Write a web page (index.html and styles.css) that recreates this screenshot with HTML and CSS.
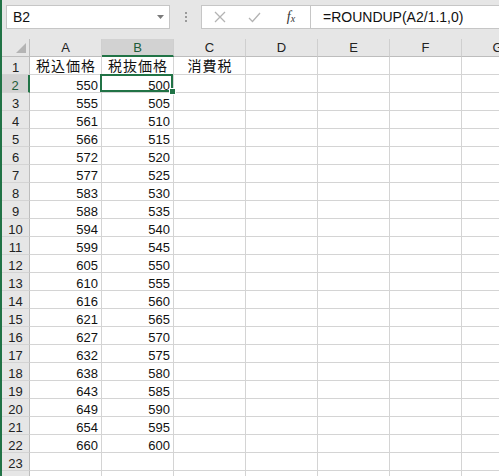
FILE: index.html
```html
<!DOCTYPE html>
<html>
<head>
    <title>Book1 - Excel</title>
    <meta charset="utf-8">
    <link rel="stylesheet" href="styles.css">
</head>
<body>
<div class="window">
    <div class="edge"></div>
    <div class="main">
        <div class="toolbar">
            <div class="namebox">
                <span>B2</span>
                <svg class="drop" width="7" height="4" viewBox="0 0 7 4"><polygon points="0,0 7,0 3.5,4" fill="#7a7a7a"/></svg>
            </div>
            <div class="grip"><i></i><i></i><i></i></div>
            <div class="fxbox">
                <span class="slot">
                    <svg width="12" height="12" viewBox="0 0 12 12"><path d="M1 1 L11 11 M11 1 L1 11" stroke="#b3b3b3" stroke-width="1.3" fill="none"/></svg>
                </span>
                <span class="slot">
                    <svg width="13" height="11" viewBox="0 0 13 11"><path d="M1 6 L4.5 9.5 L12 1" stroke="#b3b3b3" stroke-width="1.3" fill="none"/></svg>
                </span>
                <span class="slot fx">f<sub>x</sub></span>
            </div>
            <div class="formula">=ROUNDUP(A2/1.1,0)</div>
        </div>

        <div class="sheet" id="sheet"></div>
    </div>
</div>

<script type="text/javascript">
    (function(){
        var sheet = document.getElementById("sheet");
        var cols = ["A","B","C","D","E","F","G"];
        var taxIn = [550,555,561,566,572,577,583,588,594,599,605,610,616,621,627,632,638,643,649,654,660];
        var html = "";

        // header row
        html += '<div class="corner"><svg width="10" height="10" viewBox="0 0 10 10"><polygon points="0,10 10,0 10,10" fill="#b4b4b4"/></svg></div>';
        for(var c = 0; c < cols.length; c++){
            html += '<div class="colhead' + (cols[c] == "B" ? ' sel' : '') + '">' + cols[c] + '</div>';
        }

        // 23 rows visible, the 24th only shows its top gridlines
        for(var r = 1; r <= 24; r++){
            html += '<div class="rowhead' + (r == 2 ? ' sel' : '') + '">' + (r < 24 ? r : '') + '</div>';
            for(var c = 0; c < cols.length; c++){
                var text = "", cls = "cell";
                if(r == 1){
                    cls += " title";
                    if(c == 0) text = "税込価格";
                    if(c == 1) text = "税抜価格";
                    if(c == 2) text = "消費税";
                } else if(r - 2 < taxIn.length){
                    if(c == 0){ text = taxIn[r-2]; cls += " num"; }
                    if(c == 1){ text = 500 + (r-2)*5; cls += " num"; }
                }
                if(r == 2 && c == 1){
                    cls += " active";
                    text += '<span class="handle"></span>';
                }
                html += '<div class="' + cls + '">' + text + '</div>';
            }
        }
        sheet.innerHTML = html;
    })();
</script>
</body>
</html>
```

FILE: styles.css
```css
html,body{
    padding: 0;
    margin: 0;
    font-family: "Liberation Sans", Arial, sans-serif;
    background: #fff;
}

.window{
    display: flex;
    width: 499px;
    height: 476px;
    overflow: hidden;
}

.edge{
    flex: 0 0 2px;
    background: #217346;
}

.main{
    flex: 1;
    min-width: 0;
    overflow: hidden;
}

/* formula bar */
.toolbar{
    display: flex;
    align-items: flex-start;
    height: 39px;
    padding: 5px 0 0 4px;
    box-sizing: border-box;
    background: #e6e6e6;
}

.namebox{
    display: flex;
    align-items: center;
    justify-content: space-between;
    width: 164px;
    height: 24px;
    box-sizing: border-box;
    padding: 0 5px 0 6px;
    background: #fff;
    border: 1px solid #c6c6c6;
    font-size: 14px;
    color: #111;
}

.grip{
    display: flex;
    flex-direction: column;
    align-items: center;
    gap: 2px;
    width: 31px;
    padding-top: 7px;
}

.grip i{
    width: 2px;
    height: 2px;
    background: #9a9a9a;
}

.fxbox{
    display: flex;
    align-items: center;
    width: 110px;
    height: 24px;
    box-sizing: border-box;
    background: #fff;
    border: 1px solid #c6c6c6;
}

.slot{
    display: flex;
    justify-content: center;
    align-items: center;
    width: 35px;
}

.fx{
    width: 38px;
    font-family: "Liberation Serif", serif;
    font-style: italic;
    font-size: 14px;
    color: #333;
}

.fx sub{
    font-size: 10px;
    vertical-align: 0;
    position: relative;
    top: 1px;
}

.formula{
    flex: 1;
    height: 24px;
    box-sizing: border-box;
    margin-left: -1px;
    padding: 3px 0 0 12px;
    background: #fff;
    border: 1px solid #c6c6c6;
    border-right: 0;
    font-size: 14px;
    color: #111;
    white-space: nowrap;
}

/* grid */
.sheet{
    display: grid;
    grid-template-columns: 28px repeat(7, 72px);
    grid-template-rows: 18px;
    grid-auto-rows: 18px;
    font-size: 13px;
    color: #111;
}

.sheet > div{
    box-sizing: border-box;
    white-space: nowrap;
}

.corner{
    display: flex;
    justify-content: flex-end;
    align-items: flex-end;
    padding: 0 3px 3px 0;
    background: #e6e6e6;
    border-right: 1px solid #bdbdbd;
    border-bottom: 1px solid #bdbdbd;
}

.colhead{
    background: #e6e6e6;
    border-right: 1px solid #cfcfcf;
    border-bottom: 1px solid #bdbdbd;
    text-align: center;
    line-height: 17px;
    color: #222;
}

.colhead.sel{
    background: #d2d2d2;
    border-bottom: 2px solid #217346;
    color: #1d5c3a;
}

.rowhead{
    background: #e6e6e6;
    border-right: 1px solid #bdbdbd;
    border-bottom: 1px solid #d4d4d4;
    text-align: center;
    padding-top: 4px;
    line-height: 13px;
    overflow: hidden;
    color: #222;
}

.rowhead.sel{
    background: #d2d2d2;
    border-right: 2px solid #217346;
    color: #1d5c3a;
}

.cell{
    position: relative;
    border-right: 1px solid #d4d4d4;
    border-bottom: 1px solid #d4d4d4;
    padding: 4px 3px 0 3px;
    line-height: 13px;
    overflow: hidden;
}

.num{
    text-align: right;
}

.title{
    font-family: "Noto Sans CJK JP", sans-serif;
    font-size: 14px;
    letter-spacing: 1px;
    text-indent: 1px;
    text-align: center;
    padding: 0;
    line-height: 17px;
    overflow: visible;
}

.active{
    overflow: visible;
    z-index: 1;
}

.active::after{
    content: "";
    position: absolute;
    left: -2px;
    top: -1px;
    right: 0;
    bottom: 0;
    border: 2px solid #217346;
}

.handle{
    position: absolute;
    right: -3px;
    bottom: -3px;
    width: 5px;
    height: 5px;
    background: #217346;
    border: 1px solid #fff;
    z-index: 2;
}
```
